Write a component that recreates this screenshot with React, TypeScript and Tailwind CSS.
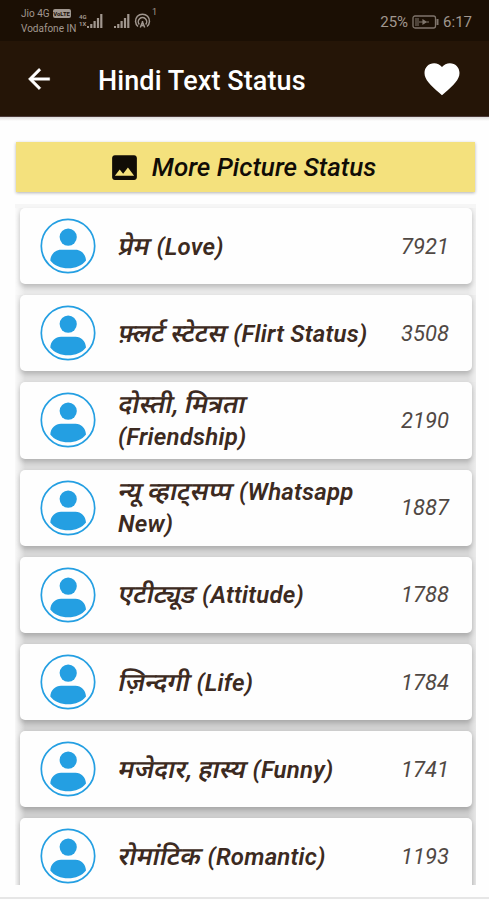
import { clsx } from "clsx";

const categories = [
    {hindi: "प्रेम", english: "(Love)", count: 7921, gap: "bg-[#e9e9e9]"},
    {hindi: "फ़्लर्ट स्टेटस", english: "(Flirt Status)", count: 3508, gap: "bg-[#dfdfdf]"},
    {hindi: "दोस्ती, मित्रता", english: "(Friendship)", count: 2190, gap: "bg-[#dbdbdb]", wrap: true},
    {hindi: "न्यू व्हाट्सप्प", english: "(Whatsapp", rest: "New)", count: 1887, gap: "bg-[#d7d7d7]"},
    {hindi: "एटीट्यूड", english: "(Attitude)", count: 1788, gap: "bg-[#d4d4d4]"},
    {hindi: "ज़िन्दगी", english: "(Life)", count: 1784, gap: "bg-[#d1d1d1]"},
    {hindi: "मजेदार, हास्य", english: "(Funny)", count: 1741, gap: "bg-[#cecece]"},
    {hindi: "रोमांटिक", english: "(Romantic)", count: 1193, gap: "bg-[#cecece]"},
];

function SignalIcon({className}: { className?: string }) {
    return (
        <svg className={className} viewBox="0 0 16 14" fill="currentColor">
            <path d="M0 12h2v2H0zM3.2 10h2.2v4H3.200zM6.500 7h2.200v7H6.500zM9.900 4h2.200v10H9.900zM13.200 0h2.200v14h-2.200z"/>
        </svg>
    );
}

function StatusBar() {
    return (
        <div className="flex h-[41px] items-start justify-between bg-[#1b0f04] pl-[21px] pr-[17px] text-[#a1978f]">
            <div className="flex">
                <div className="w-[57px] pt-[6px] text-[10px] leading-[15px] whitespace-nowrap">
                    <div className="flex items-center gap-[3px]">
                        Jio 4G
                        <span
                            className="flex h-[9px] w-[18px] items-center justify-center rounded-[2px] bg-[#a1978f] text-[6px] font-bold text-[#1b0f04]">
                            VoLTE
                        </span>
                    </div>
                    <div>Vodafone IN</div>
                </div>
                <div className="flex w-[9px] flex-col pt-[13px] pl-[1px] text-[6px] leading-[7px] font-bold">
                    <span>4G</span>
                    <span>1X</span>
                </div>
                <SignalIcon className="mt-[14px] h-[14px] w-[16px]"/>
                <SignalIcon className="mt-[14px] ml-[11px] h-[14px] w-[16px]"/>
                <svg className="mt-[13px] ml-[4px] h-[16px] w-[17px]" viewBox="0 0 17 16" fill="none"
                     stroke="currentColor" strokeWidth="1.5">
                    <path d="M4 13.500a7 7 0 1 1 9 0"/>
                    <path d="M5.300 11.500a4.200 4.200 0 1 1 6.400 0"/>
                    <path d="M8.500 8v1l-2.200 5.500M8.500 9l2.200 5.500M7 12.500h3"/>
                </svg>
                <span className="mt-[8px] ml-[1px] text-[9px] leading-[9px]">1</span>
            </div>
            <div className="flex items-center pt-[12px] text-[15px] leading-[20px]">
                <span>25%</span>
                <svg className="ml-[4px] h-[14px] w-[27px] opacity-75" viewBox="0 0 27 14" fill="none"
                     stroke="currentColor">
                    <rect x="1" y="1" width="22.5" height="12" rx="2" strokeWidth="1.3"/>
                    <path d="M25.500 4v6" strokeWidth="2"/>
                    <path d="M3 3h4v8H3z" fill="currentColor" stroke="none" opacity=".5"/>
                    <path d="M7 7h10M11 5l3 2-3 2z" strokeWidth="1.2" fill="currentColor"/>
                </svg>
                <span className="ml-[4px]">6:17</span>
            </div>
        </div>
    );
}

function Toolbar() {
    return (
        <div className="flex h-[76px] items-center border-b border-[#4b3a38] bg-[#251507] pr-[26px] pl-[23px] text-white">
            <svg className="mt-[1px] h-[32px] w-[32px]" viewBox="0 0 24 24" fill="currentColor"
                 stroke="currentColor" strokeWidth=".3">
                <path d="M20 11H7.830l5.590-5.590L12 4l-8 8 8 8 1.410-1.410L7.830 13H20v-2z"/>
            </svg>
            <h1 className="mt-[4px] ml-[43px] flex-1 text-[27px] leading-[32px] font-medium tracking-[0.1px] whitespace-nowrap">
                Hindi Text Status
            </h1>
            <svg className="h-[42px] w-[42px]" viewBox="0 0 24 24" fill="currentColor">
                <path
                    d="M12 21.350l-1.450-1.320C5.400 15.360 2 12.280 2 8.500 2 5.420 4.420 3 7.500 3c1.740 0 3.410.810 4.500 2.090C13.090 3.810 14.760 3 16.500 3 19.580 3 22 5.420 22 8.500c0 3.780-3.400 6.860-8.550 11.540L12 21.350z"/>
            </svg>
        </div>
    );
}

function UserIcon() {
    return (
        <svg className="h-[56px] w-[56px] shrink-0" viewBox="0 0 56 56" fill="#249fe2">
            <circle cx="28" cy="28" r="26.7" fill="none" stroke="#249fe2" strokeWidth="1.7"/>
            <circle cx="28.2" cy="19.1" r="8.6"/>
            <path d="M10.300 42.500C10.600 36 15.500 31.700 21 31.700h14.500c5.500 0 10.200 4.300 10.500 10.800-4 5.200-10.500 7.800-17.800 7.800s-14-2.600-17.900-7.800z"/>
        </svg>
    );
}

export default function App() {
    return (
        <div
            className="flex h-[900px] w-full flex-col overflow-hidden bg-[#fefefe] font-[Roboto,'Noto_Sans',sans-serif]">
            <StatusBar/>
            <Toolbar/>
            <div className="h-[4px] shrink-0 bg-linear-to-b from-[#dedddc] to-[#fefefe]"/>

            <button
                className="mr-[14px] ml-[16px] mt-[21px] flex h-[50px] shrink-0 items-center justify-center bg-[#f4e17d] pr-[7px] text-[26px] font-medium text-[#100c06] italic shadow-[0_1px_3px_rgba(0,0,0,0.3)]">
                <svg className="mr-[11px] h-[33px] w-[33px]" viewBox="0 0 24 24" fill="currentColor">
                    <path
                        d="M21 19V5c0-1.100-.9-2-2-2H5c-1.100 0-2 .9-2 2v14c0 1.100.9 2 2 2h14c1.100 0 2-.9 2-2zM8.500 13.500l2.500 3.010L14.500 12l4.500 6H5l3.500-4.500z"/>
                </svg>
                More Picture Status
            </button>

            <div className="mr-[13px] ml-[15px] mt-[12px] h-[681px] shrink-0 overflow-hidden">
                <div className="h-[4px] bg-[#f6f6f6]"/>
                {categories.map((item) => (
                    <div
                        key={item.count}
                        className={clsx(
                            "h-[87.200px] bg-[linear-gradient(to_right,rgba(255,255,255,0.85),rgba(255,255,255,0)_10px,rgba(255,255,255,0)_453px,rgba(255,255,255,0.5))] pr-[4px] pb-[11px] pl-[5px]",
                            item.gap
                        )}
                    >
                        <div
                            className="flex h-full items-center rounded-[5px] bg-[#fefefe] pr-[23px] pl-[20px] shadow-[0_3px_5px_rgba(0,0,0,0.2)]">
                            <UserIcon/>
                            <div
                                className="ml-[22px] flex-1 text-[24px] leading-[32px] font-semibold tracking-[0.2px] whitespace-nowrap text-[#3c2a21] italic">
                                {/* Devanagari has no italic face, so it is slanted here */}
                                <span
                                    className="inline-block -skew-x-12 pl-[1px] text-[25.500px] font-semibold tracking-normal not-italic">
                                    {item.hindi}
                                </span>
                                {item.wrap ? <br/> : " "}{item.english}
                                {item.rest && <><br/>{item.rest}</>}
                            </div>
                            <span className="text-[22px] text-[#504844] italic">{item.count}</span>
                        </div>
                    </div>
                ))}
            </div>
            <div className="mt-[12px] h-[2px] shrink-0 bg-[#e6e6e6]"/>
        </div>
    );
}
